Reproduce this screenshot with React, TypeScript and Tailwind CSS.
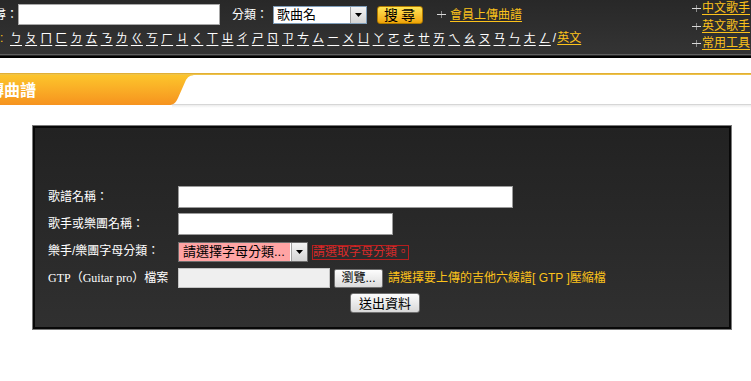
import React from "react";

const BOPO = ["ㄅ","ㄆ","ㄇ","ㄈ","ㄉ","ㄊ","ㄋ","ㄌ","ㄍ","ㄎ","ㄏ","ㄐ","ㄑ","ㄒ","ㄓ","ㄔ","ㄕ","ㄖ","ㄗ","ㄘ","ㄙ","ㄧ","ㄨ","ㄩ","ㄚ","ㄛ","ㄜ","ㄝ","ㄞ","ㄟ","ㄠ","ㄡ","ㄢ","ㄣ","ㄤ","ㄥ"];

function Plus() {
  return (
    <svg width="9" height="9" viewBox="0 0 9 9" className="shrink-0">
      <line x1="4.5" y1="1" x2="4.5" y2="8" stroke="#8a8a8a" strokeWidth="1" />
      <line x1="0" y1="4.5" x2="9" y2="4.5" stroke="#d8d8d8" strokeWidth="1" />
    </svg>
  );
}

function Arrow() {
  return (
    <div className="w-[16px] h-full bg-linear-to-b from-[#f4f4f4] to-[#d4d4d4] border-l border-[#a0a0a0] flex items-center justify-center">
      <svg width="7" height="4" viewBox="0 0 7 4">
        <path d="M0 0 L7 0 L3.5 4 Z" fill="#000" />
      </svg>
    </div>
  );
}

export default function App() {
  return (
    <div className="w-[751px] h-[381px] bg-white overflow-hidden font-['Liberation_Sans','Noto_Sans_CJK_TC',sans-serif]">
      {/* Header */}
      <div className="h-[54px] bg-linear-to-b from-[#282828] to-[#343434] flex justify-between">
        <div className="flex flex-col">
          <div className="h-[29px] flex items-center text-[12px] text-white whitespace-nowrap">
            <span className="w-[18px] overflow-hidden flex justify-end">搜尋：</span>
            <div className="w-[202px] h-[21px] bg-white border border-[#a8a8a8]" />
            <span className="ml-[12px]">分類：</span>
            <div className="ml-[5px] w-[94px] h-[18px] bg-white border border-[#7f9db9] flex items-stretch">
              <span className="flex-1 text-[13px] text-black leading-[16px] pl-[3px]">歌曲名</span>
              <Arrow />
            </div>
            <div className="ml-[10px] w-[46px] h-[18px] rounded-[3px] bg-linear-to-b from-[#ffe552] to-[#f0a500] border border-[#b07a00] flex items-center justify-center text-[14px] text-black leading-none tracking-[3px] pl-[2px]">
              搜尋
            </div>
            <span className="ml-[14px] flex items-center gap-[4px]">
              <Plus />
              <span className="text-[#fcc21b] underline underline-offset-2">會員上傳曲譜</span>
            </span>
          </div>
          <div className="h-[18px] flex items-center text-[12px] whitespace-nowrap">
            <span className="w-[10px] text-[#fcc21b]">:</span>
            <div className="flex gap-[3.1px]">
              {BOPO.map((b) => (
                <span key={b} className="text-white underline underline-offset-2 font-['Noto_Sans_CJK_TC',sans-serif]">{b}</span>
              ))}
            </div>
            <span className="text-white ml-[2px]">/</span>
            <span className="text-[#fcc21b] underline underline-offset-2 ml-[1px]">英文</span>
          </div>
        </div>
        <div className="w-[59px] flex flex-col text-[12px] leading-[17.5px] pt-0 whitespace-nowrap">
          {["中文歌手", "英文歌手", "常用工具"].map((t) => (
            <div key={t} className="flex items-center gap-[1px]">
              <Plus />
              <span className="text-[#fcc21b] underline underline-offset-2">{t}</span>
            </div>
          ))}
        </div>
      </div>
      <div className="h-px bg-[#5e5e5e]" />
      <div className="h-px bg-[#2a2a2a]" />
      <div className="h-[2px] bg-black" />

      {/* Tab */}
      <div className="h-[15px]" />
      <div className="h-[2px] bg-linear-to-b from-[#dca52a] to-[#f3cd52]" />
      <div className="h-[30px] flex">
        <div className="w-[168px] h-full bg-linear-to-b from-[#fcc52c] to-[#f6931f] flex items-center">
          <span className="w-[36px] overflow-hidden flex justify-end whitespace-nowrap text-[16px] font-bold text-white leading-none pt-[1px]">上傳曲譜</span>
        </div>
        <svg width="28" height="30" viewBox="0 0 28 30" className="shrink-0">
          <defs>
            <linearGradient id="og" x1="0" y1="0" x2="0" y2="1">
              <stop offset="0" stopColor="#fcc52c" />
              <stop offset="1" stopColor="#f6931f" />
            </linearGradient>
          </defs>
          <rect x="0" y="29" width="28" height="1" fill="#d6d6d6" />
          <path d="M0 0 L28 0 C22 0 19.5 2 17.5 6 L10 23 C8 27.5 5.5 30 1 30 L0 30 Z" fill="url(#og)" />
        </svg>
        <div className="flex-1 h-full border-b border-[#d6d6d6] bg-white" />
      </div>
      <div className="flex h-[3px]">
        <div className="w-[172px]" />
        <div className="flex-1 bg-linear-to-b from-[#ececec] to-white" />
      </div>

      {/* Form box */}
      <div className="ml-[32px] mt-[17px] w-[700px] h-[205px] border border-[#7a7a7a]">
        <div className="h-full border-2 border-[#080808] bg-linear-to-b from-[#222222] to-[#303030] pt-[58px] pl-[13px] text-[12px] text-white whitespace-nowrap">
          <div className="h-[22px] flex items-center">
            <span className="w-[130px]">歌譜名稱：</span>
            <div className="w-[335px] h-[22px] bg-white border border-[#9a9a9a]" />
          </div>
          <div className="mt-[5px] h-[22px] flex items-center">
            <span className="w-[130px]">歌手或樂團名稱：</span>
            <div className="w-[215px] h-[22px] bg-white border border-[#9a9a9a]" />
          </div>
          <div className="mt-[5px] h-[22px] flex items-center">
            <span className="w-[130px]">樂手/樂團字母分類：</span>
            <div className="mt-[2px] w-[130px] h-[20px] bg-[#ffa4a4] border border-[#6e6e6e] flex items-stretch overflow-hidden">
              <span className="flex-1 overflow-hidden text-[13px] text-black leading-[18px] pl-[4px]">請選擇字母分類...</span>
              <div className="border-l border-white">
                <Arrow />
              </div>
            </div>
            <span className="ml-[4px] mt-[2px] w-[97px] h-[15px] border border-[#b41e1e] text-[#d82a2a] leading-[13px] text-[12px] flex items-center">請選取字母分類。</span>
          </div>
          <div className="mt-[5px] h-[22px] flex items-center">
            <span className="w-[130px] font-['Liberation_Serif','Noto_Sans_CJK_TC',serif] text-[12px]">GTP（Guitar pro）檔案</span>
            <div className="w-[152px] h-[20px] bg-[#efefef] border border-[#c4c4c4]" />
            <div className="ml-[4px] w-[49px] h-[19px] rounded-[2px] border border-[#707070] bg-linear-to-b from-[#fdfdfd] to-[#dcdcdc] text-black text-[12px] leading-none flex items-center justify-center">瀏覽...</div>
            <span className="ml-[5px] text-[#fcc21b]">請選擇要上傳的吉他六線譜[ GTP ]壓縮檔</span>
          </div>
          <div className="mt-[4px] h-[20px] flex items-center">
            <div className="ml-[302px] w-[70px] h-[20px] rounded-[3px] border border-[#707070] bg-linear-to-b from-[#fdfdfd] to-[#d8d8d8] text-black text-[13px] leading-none flex items-center justify-center">送出資料</div>
          </div>
        </div>
      </div>
    </div>
  );
}
